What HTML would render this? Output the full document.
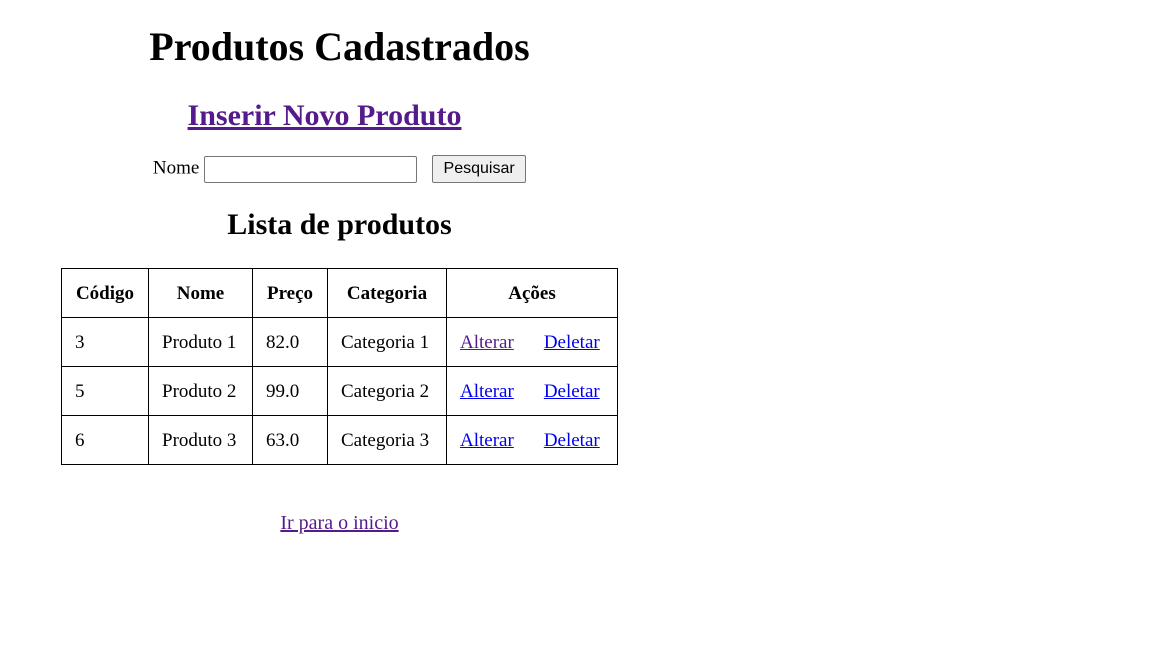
<!DOCTYPE html>
<html><head><meta charset="utf-8"><style>
body{margin:0;width:1152px;height:648px;background:#fff;font-family:"Liberation Serif",serif;font-size:20px;color:#000;position:relative;overflow:hidden}
.c{position:absolute;left:0;width:679px;text-align:center;white-space:nowrap}
h1{font-size:40px;margin:0;line-height:46px}
a{color:#0000ee}
a.v{color:#551a8b}
table{position:absolute;left:61px;top:268px;border-collapse:collapse;table-layout:fixed;width:556px}
td,th{border:1px solid #000;height:46px;padding:2px 0 0 13px;text-align:left;font-size:19px;white-space:nowrap;overflow:hidden}
th{text-align:center;padding:2px 0 0 0}
td.a a+a{margin-left:30px}
input.t{width:213px;height:27px;box-sizing:border-box;border:1px solid #767676;border-radius:2px;padding:0;vertical-align:middle}
button{font-family:"Liberation Sans",sans-serif;font-size:16px;height:28px;width:94px;border:1px solid #767676;border-radius:2px;background:#efefef;margin-left:15px;vertical-align:middle;padding:0}
</style></head><body>
<div class="c" style="top:24px"><h1>Produtos Cadastrados</h1></div>
<div class="c" style="top:99px;left:-15px;font-size:30px;font-weight:bold"><a class="v" href="#">Inserir Novo Produto</a></div>
<div class="c" style="top:155px;font-size:19px">Nome <input class="t"><button>Pesquisar</button></div>
<div class="c" style="top:208px;font-size:30px;font-weight:bold">Lista de produtos</div>
<table>
<colgroup><col style="width:87px"><col style="width:104px"><col style="width:75px"><col style="width:119px"><col style="width:171px"></colgroup>
<tr><th>Código</th><th>Nome</th><th>Preço</th><th>Categoria</th><th>Ações</th></tr>
<tr><td>3</td><td>Produto 1</td><td>82.0</td><td>Categoria 1</td><td class="a"><a class="v" href="#">Alterar</a><a href="#">Deletar</a></td></tr>
<tr><td>5</td><td>Produto 2</td><td>99.0</td><td>Categoria 2</td><td class="a"><a href="#">Alterar</a><a href="#">Deletar</a></td></tr>
<tr><td>6</td><td>Produto 3</td><td>63.0</td><td>Categoria 3</td><td class="a"><a href="#">Alterar</a><a href="#">Deletar</a></td></tr>
</table>
<div class="c" style="top:512px"><a class="v" href="#">Ir para o inicio</a></div>
</body></html>
